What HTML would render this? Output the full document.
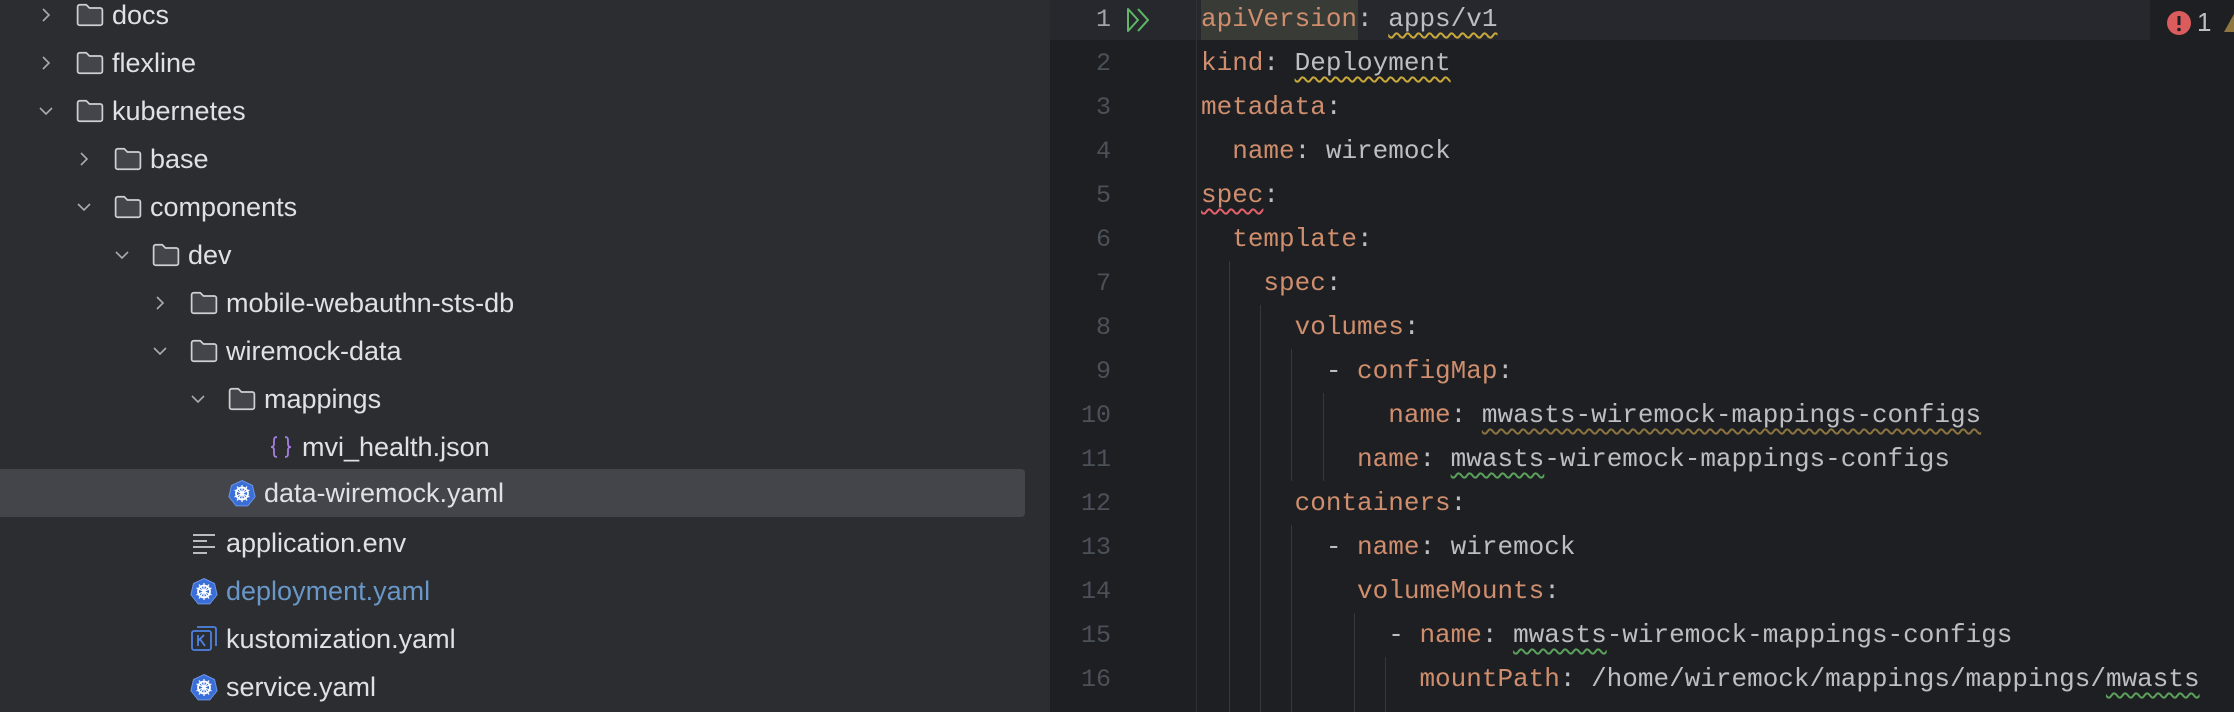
<!DOCTYPE html>
<html><head><meta charset="utf-8"><style>
*{margin:0;padding:0;box-sizing:border-box}
body{width:2234px;height:712px;overflow:hidden;background:#1e1f22;position:relative;font-family:"Liberation Sans",sans-serif}
#left{position:absolute;left:0;top:0;width:1050px;height:712px;background:#2b2d30}
.row{position:absolute;left:0;height:48px;width:1025px}
.row .t{position:absolute;top:8px;font-size:27px;color:#dfe1e5;white-space:nowrap;line-height:32px}
.row svg{position:absolute}
.sel{background:#43454a;border-radius:0 4px 4px 0}
#ed{position:absolute;left:1050px;top:0;width:1184px;height:712px}
.ln{position:absolute;left:0;width:61px;text-align:right;font-family:"Liberation Mono",monospace;font-size:25px;color:#4b5059;height:44px;line-height:46px}
.code{position:absolute;left:151px;font-family:"Liberation Mono",monospace;font-size:26px;line-height:44px;height:44px;white-space:pre;color:#bcbec4}
.k{color:#cf8e6d}
.wy{text-decoration:underline wavy #c9a83c;text-underline-offset:6px;text-decoration-thickness:1.5px}
.wr{text-decoration:underline wavy #e5606a;text-underline-offset:6px;text-decoration-thickness:1.5px}
.wg{text-decoration:underline wavy #5ba05b;text-underline-offset:6px;text-decoration-thickness:1.5px}
.wb{text-decoration:underline wavy #8a7440;text-underline-offset:6px;text-decoration-thickness:1.5px}
.g{position:absolute;width:1px;background:#35373c}
</style></head><body>
<div id="left">
<svg width="0" height="0" style="position:absolute">
<defs>
<symbol id="fold" viewBox="0 0 26 22"><path d="M1.5 3.5a2 2 0 0 1 2-2h6l3 3h10a2 2 0 0 1 2 2v12a2 2 0 0 1-2 2h-19a2 2 0 0 1-2-2z" fill="#43454a" stroke="#ced0d6" stroke-width="1.6"/></symbol>
<symbol id="cr" viewBox="0 0 12 16"><path d="M3 2l6 6-6 6" fill="none" stroke="#a8abb2" stroke-width="1.6"/></symbol>
<symbol id="cd" viewBox="0 0 16 12"><path d="M2 3l6 6 6-6" fill="none" stroke="#a8abb2" stroke-width="1.6"/></symbol>
<symbol id="k8" viewBox="0 0 28 28"><path d="M14 1.5l10.5 5 2.6 11.3-7.3 9.1H8.2L0.9 17.8 3.5 6.5z" fill="#3a6fd8" stroke="#6c93e6" stroke-width="1"/><circle cx="14" cy="14.5" r="6" fill="none" stroke="#fff" stroke-width="1.8"/><circle cx="14" cy="14.5" r="1.6" fill="#fff"/><path d="M14 6v17M6.5 11l15 7M21.5 11l-15 7M9 21.5l10-14M19 21.5l-10-14" stroke="#fff" stroke-width="1.2"/></symbol>
</defs></svg>

<div class="row" style="top:-9px"><svg style="left:40px;top:16px" width="12" height="16"><use href="#cr"/></svg><svg style="left:76px;top:12px" width="28" height="24"><use href="#fold"/></svg><span class="t" style="left:112px">docs</span></div>
<div class="row" style="top:39px"><svg style="left:40px;top:16px" width="12" height="16"><use href="#cr"/></svg><svg style="left:76px;top:12px" width="28" height="24"><use href="#fold"/></svg><span class="t" style="left:112px">flexline</span></div>
<div class="row" style="top:87px"><svg style="left:38px;top:18px" width="16" height="12"><use href="#cd"/></svg><svg style="left:76px;top:12px" width="28" height="24"><use href="#fold"/></svg><span class="t" style="left:112px">kubernetes</span></div>
<div class="row" style="top:135px"><svg style="left:78px;top:16px" width="12" height="16"><use href="#cr"/></svg><svg style="left:114px;top:12px" width="28" height="24"><use href="#fold"/></svg><span class="t" style="left:150px">base</span></div>
<div class="row" style="top:183px"><svg style="left:76px;top:18px" width="16" height="12"><use href="#cd"/></svg><svg style="left:114px;top:12px" width="28" height="24"><use href="#fold"/></svg><span class="t" style="left:150px">components</span></div>
<div class="row" style="top:231px"><svg style="left:114px;top:18px" width="16" height="12"><use href="#cd"/></svg><svg style="left:152px;top:12px" width="28" height="24"><use href="#fold"/></svg><span class="t" style="left:188px">dev</span></div>
<div class="row" style="top:279px"><svg style="left:154px;top:16px" width="12" height="16"><use href="#cr"/></svg><svg style="left:190px;top:12px" width="28" height="24"><use href="#fold"/></svg><span class="t" style="left:226px">mobile-webauthn-sts-db</span></div>
<div class="row" style="top:327px"><svg style="left:152px;top:18px" width="16" height="12"><use href="#cd"/></svg><svg style="left:190px;top:12px" width="28" height="24"><use href="#fold"/></svg><span class="t" style="left:226px">wiremock-data</span></div>
<div class="row" style="top:375px"><svg style="left:190px;top:18px" width="16" height="12"><use href="#cd"/></svg><svg style="left:228px;top:12px" width="28" height="24"><use href="#fold"/></svg><span class="t" style="left:264px">mappings</span></div>
<div class="row" style="top:423px"><svg style="left:268px;top:11px" width="26" height="26" viewBox="0 0 26 26"><path d="M9 3c-3 0-3 2-3 4v3c0 2-1 3-3 3 2 0 3 1 3 3v3c0 2 0 4 3 4M17 3c3 0 3 2 3 4v3c0 2 1 3 3 3-2 0-3 1-3 3v3c0 2 0 4-3 4" fill="none" stroke="#a57fe0" stroke-width="1.8"/></svg><span class="t" style="left:302px">mvi_health.json</span></div>
<div class="row sel" style="top:469px"><svg style="left:228px;top:10px" width="28" height="28"><use href="#k8"/></svg><span class="t" style="left:264px">data-wiremock.yaml</span></div>
<div class="row" style="top:519px"><svg style="left:192px;top:12px" width="24" height="24" viewBox="0 0 24 24"><path d="M1 4h22M1 10h14M1 16h22M1 22h14" stroke="#ced0d6" stroke-width="1.8"/></svg><span class="t" style="left:226px">application.env</span></div>
<div class="row" style="top:567px"><svg style="left:190px;top:10px" width="28" height="28"><use href="#k8"/></svg><span class="t" style="left:226px;color:#6897c8">deployment.yaml</span></div>
<div class="row" style="top:615px"><svg style="left:191px;top:11px" width="26" height="26" viewBox="0 0 26 26"><rect x="1" y="5" width="19" height="19" rx="2" fill="none" stroke="#4e82e3" stroke-width="1.8"/><path d="M6 1h17a2 2 0 0 1 2 2v17" fill="none" stroke="#4e82e3" stroke-width="1.8"/><path d="M7 9v11M7 15l6-6M9 13l5 7" stroke="#4e82e3" stroke-width="1.8" fill="none"/></svg><span class="t" style="left:226px">kustomization.yaml</span></div>
<div class="row" style="top:663px"><svg style="left:190px;top:10px" width="28" height="28"><use href="#k8"/></svg><span class="t" style="left:226px">service.yaml</span></div>
</div>

<div id="ed">
<div style="position:absolute;left:0;top:0;width:1100px;height:40px;background:#26282e"></div>
<div style="position:absolute;left:151px;top:0;width:157px;height:40px;background:#393b37"></div>
<div class="g" style="left:146px;top:0;height:712px;background:#2f3136"></div>
<svg style="position:absolute;left:1116px;top:10px" width="26" height="26" viewBox="0 0 26 26"><circle cx="13" cy="13" r="12" fill="#db5c5c"/><path d="M13 6v9" stroke="#1e1f22" stroke-width="3"/><circle cx="13" cy="19.5" r="1.8" fill="#1e1f22"/></svg>
<span style="position:absolute;left:1147px;top:7px;font-size:26px;color:#bcbec4">1</span>
<svg style="position:absolute;left:1174px;top:12px" width="14" height="22"><path d="M10 2L0 20h10z" fill="#8f7740"/></svg>
<svg style="position:absolute;left:76px;top:7px" width="26" height="26" viewBox="0 0 26 26"><path d="M2 2l10 11-10 11z M12 2l10 11-10 11" fill="none" stroke="#5fb865" stroke-width="2" stroke-linejoin="round"/></svg>

<div class="g" style="left:179px;top:261px;height:451px"></div>
<div class="g" style="left:210px;top:305px;height:407px"></div>
<div class="g" style="left:241px;top:349px;height:132px"></div>
<div class="g" style="left:241px;top:525px;height:187px"></div>
<div class="g" style="left:273px;top:393px;height:88px"></div>
<div class="g" style="left:304px;top:613px;height:99px"></div>
<div class="g" style="left:335px;top:657px;height:55px"></div>

<div class="ln" style="top:-3px;color:#a1a3ab">1</div><div class="code" style="top:-3px"><span class="k">apiVersion</span>: <span class="wy">apps/v1</span></div>
<div class="ln" style="top:41px">2</div><div class="code" style="top:41px"><span class="k">kind</span>: <span class="wy">Deployment</span></div>
<div class="ln" style="top:85px">3</div><div class="code" style="top:85px"><span class="k">metadata</span>:</div>
<div class="ln" style="top:129px">4</div><div class="code" style="top:129px">  <span class="k">name</span>: wiremock</div>
<div class="ln" style="top:173px">5</div><div class="code" style="top:173px"><span class="k wr">spec</span>:</div>
<div class="ln" style="top:217px">6</div><div class="code" style="top:217px">  <span class="k">template</span>:</div>
<div class="ln" style="top:261px">7</div><div class="code" style="top:261px">    <span class="k">spec</span>:</div>
<div class="ln" style="top:305px">8</div><div class="code" style="top:305px">      <span class="k">volumes</span>:</div>
<div class="ln" style="top:349px">9</div><div class="code" style="top:349px">        - <span class="k">configMap</span>:</div>
<div class="ln" style="top:393px">10</div><div class="code" style="top:393px">            <span class="k">name</span>: <span class="wb">mwasts-wiremock-mappings-configs</span></div>
<div class="ln" style="top:437px">11</div><div class="code" style="top:437px">          <span class="k">name</span>: <span class="wg">mwasts</span>-wiremock-mappings-configs</div>
<div class="ln" style="top:481px">12</div><div class="code" style="top:481px">      <span class="k">containers</span>:</div>
<div class="ln" style="top:525px">13</div><div class="code" style="top:525px">        - <span class="k">name</span>: wiremock</div>
<div class="ln" style="top:569px">14</div><div class="code" style="top:569px">          <span class="k">volumeMounts</span>:</div>
<div class="ln" style="top:613px">15</div><div class="code" style="top:613px">            - <span class="k">name</span>: <span class="wg">mwasts</span>-wiremock-mappings-configs</div>
<div class="ln" style="top:657px">16</div><div class="code" style="top:657px">              <span class="k">mountPath</span>: /home/wiremock/mappings/mappings/<span class="wg">mwasts</span></div>
</div>
</body></html>
